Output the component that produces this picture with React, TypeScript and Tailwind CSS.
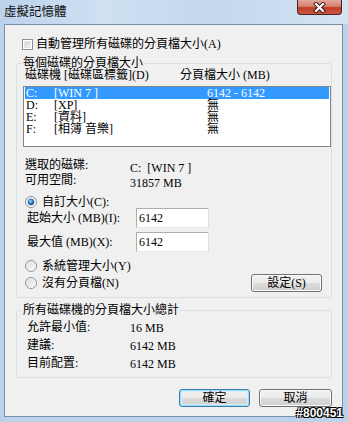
import React from 'react'

const DRIVES = [
  { letter: 'C:', label: '[WIN 7 ]', size: '6142 - 6142', selected: true },
  { letter: 'D:', label: '[XP]', size: '無' },
  { letter: 'E:', label: '[資料]', size: '無' },
  { letter: 'F:', label: '[相簿 音樂]', size: '無' },
]

const TOTALS = [
  { label: '允許最小值:', value: '16 MB' },
  { label: '建議:', value: '6142 MB' },
  { label: '目前配置:', value: '6142 MB' },
]

function Radio({ checked }: { checked?: boolean }) {
  return (
    <svg width="12" height="12" viewBox="0 0 12 12" className="shrink-0">
      <defs>
        <linearGradient id={checked ? 'rbg1' : 'rbg0'} x1="0" y1="0" x2="1" y2="1">
          <stop offset="0" stopColor="#d6d6d6" />
          <stop offset="1" stopColor="#ffffff" />
        </linearGradient>
        <radialGradient id="rdot" cx="0.4" cy="0.35" r="0.7">
          <stop offset="0" stopColor="#9fe0fb" />
          <stop offset="0.5" stopColor="#2c8ad6" />
          <stop offset="1" stopColor="#0d3f86" />
        </radialGradient>
      </defs>
      <circle cx="6" cy="6" r="5.5" fill={`url(#${checked ? 'rbg1' : 'rbg0'})`} stroke="#949494" />
      <circle cx="6" cy="6" r="4.2" fill="none" stroke="#f4f4f4" strokeWidth="0.8" />
      {checked && <circle cx="6" cy="6" r="3" fill="url(#rdot)" stroke="#1c5a9e" strokeWidth="0.5" />}
    </svg>
  )
}

function Checkbox() {
  return (
    <div className="w-[11px] h-[11px] shrink-0 border border-[#8e8f8f] bg-white p-[1px]">
      <div className="w-full h-full bg-[linear-gradient(135deg,#cfcfcf,#f6f6f6)] border border-[#e6e6e6]" />
    </div>
  )
}

function WinButton({ children, width, isDefault }: { children: React.ReactNode; width: string; isDefault?: boolean }) {
  return (
    <button
      className={`${width} h-[18px] rounded-[3px] border leading-[14px] text-[12px] text-black ${
        isDefault
          ? 'border-[#3c7fb1] shadow-[inset_0_0_0_1px_#9fd8f6,inset_0_0_0_2px_#d6eefb] bg-[linear-gradient(#f2f2f2,#ebebeb_50%,#dddddd_50%,#cfcfcf)]'
          : 'border-[#707070] shadow-[inset_0_0_0_1px_#fbfbfb] bg-[linear-gradient(#f2f2f2,#ebebeb_50%,#dddddd_50%,#cfcfcf)]'
      }`}
    >
      {children}
    </button>
  )
}

export default function App() {
  return (
    <div className="relative w-[348px] h-[422px] overflow-hidden bg-[#bcd2ea] font-['Liberation_Serif','Noto_Sans_CJK_TC',serif] text-[12px] text-black">
      {/* Title bar */}
      <div className="h-[24px] flex items-start bg-[linear-gradient(90deg,#bcd3ec,#cfe0f2_30%,#c3d8ee_60%,#d3e3f3)]">
        <span className="pl-[4px] pt-[3px] leading-[16px] text-[12.5px] font-['Noto_Sans_CJK_TC',sans-serif] text-[#111]">虛擬記憶體</span>
        <div className="ml-auto mr-[6px] w-[45px] h-[15px] rounded-b-[4px] border border-t-0 border-[#4a2020] bg-[linear-gradient(#e3a99b,#d47f6d_45%,#c13c27_55%,#c9573f)] flex items-center justify-center">
          <svg width="13" height="11" viewBox="0 0 13 11">
            <path d="M3 2 L10 9 M10 2 L3 9" stroke="#3b1616" strokeWidth="4" strokeLinecap="square" />
            <path d="M3 2 L10 9 M10 2 L3 9" stroke="#ffffff" strokeWidth="2.2" strokeLinecap="square" />
          </svg>
        </div>
      </div>

      {/* Client area */}
      <div className="ml-[4px] mr-[5px] h-[393px] border border-[#7890ab] bg-[#f0f0f0] flex flex-col">
        <div className="mt-[13px] h-[12px] pl-[17px] flex items-center gap-[3px]">
          <Checkbox />
          <span className="leading-[12px]">自動管理所有磁碟的分頁檔大小(A)</span>
        </div>

        {/* Per-drive group */}
        <fieldset className="mt-[6px] ml-[11px] w-[316px] h-[242px] border border-[#d5dfe5] rounded-[3px] p-0">
          <legend className="ml-[5px] px-[1px] leading-[14px]">每個磁碟的分頁檔大小</legend>
          <div className="-mt-[1px] h-[12px] pl-[8px] grid grid-cols-[155px_1fr] leading-[12px]">
            <span>磁碟機 [磁碟區標籤](D)</span>
            <span>分頁檔大小 (MB)</span>
          </div>

          <div className="mt-[5px] ml-[6px] w-[308px] h-[61px] border border-[#828790] bg-white px-[1px]">
            {DRIVES.map(d => (
              <div
                key={d.letter}
                className={`h-[12px] leading-[12px] pl-[1px] grid grid-cols-[28px_153px_1fr] whitespace-pre ${
                  d.selected ? 'bg-[#3399ff] text-white' : ''
                }`}
              >
                <span>{d.letter}</span>
                <span>{d.label}</span>
                <span>{d.size}</span>
              </div>
            ))}
          </div>

          <div className="mt-[11px] pl-[8px] grid grid-cols-[105px_1fr] grid-rows-[15px_15px] leading-[14px]">
            <span>選取的磁碟:</span>
            <span className="pt-[3px] whitespace-pre">C:  [WIN 7 ]</span>
            <span>可用空間:</span>
            <span className="pt-[3px]">31857 MB</span>
          </div>

          <div className="mt-[8px] h-[12px] pl-[8px] flex items-center gap-[5px]">
            <Radio checked />
            <span className="leading-[12px]">自訂大小(C):</span>
          </div>

          <div className="pl-[10px] grid grid-cols-[109px_73px] grid-rows-[20px_20px] gap-y-[4px] items-center">
            <span className="leading-[14px]">起始大小 (MB)(I):</span>
            <div className="h-[20px] border border-[#abadb3] border-b-[#e3e9ef] border-r-[#dbdfe6] bg-white pl-[2px] pt-[2px] leading-[14px]">6142</div>
            <span className="leading-[14px]">最大值 (MB)(X):</span>
            <div className="h-[20px] border border-[#abadb3] border-b-[#e3e9ef] border-r-[#dbdfe6] bg-white pl-[2px] pt-[2px] leading-[14px]">6142</div>
          </div>

          <div className="mt-[8px] h-[12px] pl-[8px] flex items-center gap-[5px]">
            <Radio />
            <span className="leading-[12px]">系統管理大小(Y)</span>
          </div>

          <div className="mt-[2px] h-[18px] pl-[8px] pr-[9px] flex items-center gap-[5px]">
            <Radio />
            <span className="leading-[12px]">沒有分頁檔(N)</span>
            <div className="ml-auto">
              <WinButton width="w-[71px]">設定(S)</WinButton>
            </div>
          </div>
        </fieldset>

        {/* Totals group */}
        <fieldset className="mt-[5px] ml-[11px] w-[316px] h-[75px] border border-[#d5dfe5] rounded-[3px] p-0">
          <legend className="ml-[5px] px-[1px] leading-[14px]">所有磁碟機的分頁檔大小總計</legend>
          <div className="mt-[1px] pl-[10px]">
            {TOTALS.map(t => (
              <div key={t.label} className="h-[18px] grid grid-cols-[103px_1fr] items-center leading-[14px]">
                <span>{t.label}</span>
                <span className="pt-[1px]">{t.value}</span>
              </div>
            ))}
          </div>
        </fieldset>

        <div className="mt-[11px] mr-[10px] flex justify-end gap-[9px]">
          <WinButton width="w-[71px]" isDefault>確定</WinButton>
          <WinButton width="w-[73px]">取消</WinButton>
        </div>
      </div>

      {/* watermark */}
      <span className="absolute right-[5px] bottom-[2px] font-['Liberation_Sans',sans-serif] font-bold text-[12px] leading-[13px] text-white [text-shadow:-1px_-1px_0_#000,1px_-1px_0_#000,-1px_1px_0_#000,1px_1px_0_#000]">
        #800451
      </span>
    </div>
  )
}
